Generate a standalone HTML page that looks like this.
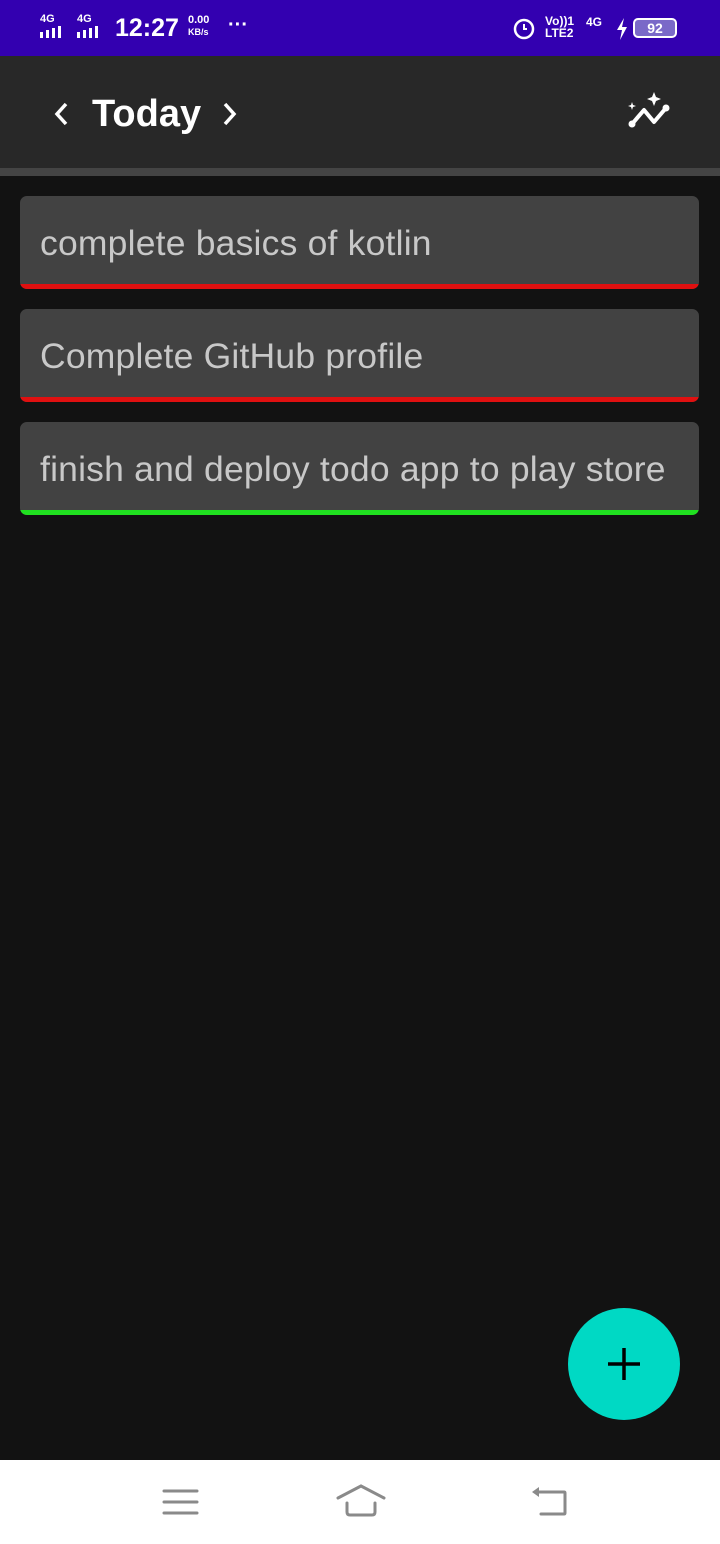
<!DOCTYPE html>
<html><head><meta charset="utf-8"><style>
*{margin:0;padding:0;box-sizing:border-box}
body{width:720px;height:1544px;background:#121212;font-family:"Liberation Sans",sans-serif;position:relative;overflow:hidden}
.sb{position:absolute;top:0;left:0;width:720px;height:56px;background:#3300b0;color:#fff}
.tb{position:absolute;top:56px;left:0;width:720px;height:112px;background:#282828}
.strip{position:absolute;top:168px;left:0;width:720px;height:8px;background:#444}
.card{position:absolute;left:20px;width:679px;height:93px;background:#424242;border-radius:7px;overflow:hidden;color:#c8c8c8;font-size:35.5px;padding-left:20px;line-height:94px;letter-spacing:0.2px}
.card:after{content:"";position:absolute;left:0;right:0;bottom:0;height:5px;background:var(--c)}
.fab{position:absolute;left:568px;top:1308px;width:112px;height:112px;border-radius:50%;background:#00d9c4}
.nav{position:absolute;top:1460px;left:0;width:720px;height:84px;background:#fff}
</style></head><body>
<div class="sb">
<div style="position:absolute;left:40px;top:13px;font-size:11px;font-weight:bold">4G</div>
<div style="position:absolute;left:77px;top:13px;font-size:11px;font-weight:bold">4G</div>
<svg style="position:absolute;left:40px;top:26px" width="70" height="14"><g fill="#fff"><rect x="0" y="6" width="3" height="6"/><rect x="6" y="4" width="3" height="8"/><rect x="12" y="2" width="3" height="10"/><rect x="18" y="0" width="3" height="12"/><rect x="37" y="6" width="3" height="6"/><rect x="43" y="4" width="3" height="8"/><rect x="49" y="2" width="3" height="10"/><rect x="55" y="0" width="3" height="12"/></g></svg>
<div style="position:absolute;left:115px;top:14px;font-size:25px;font-weight:bold">12:27</div>
<div style="position:absolute;left:188px;top:14px;font-size:11px;font-weight:bold;line-height:12px">0.00<br><span style="font-size:9px">KB/s</span></div>
<div style="position:absolute;left:228px;top:14px;font-size:20px;font-weight:bold">···</div>
<svg style="position:absolute;left:512px;top:16px" width="24" height="24"><circle cx="12" cy="13" r="9" fill="none" stroke="#fff" stroke-width="2.5"/><path d="M12 8v5h3" stroke="#fff" stroke-width="2" fill="none"/></svg>
<div style="position:absolute;left:545px;top:15px;font-size:12px;font-weight:bold;line-height:12px">Vo))1<br>LTE2</div>
<div style="position:absolute;left:586px;top:15px;font-size:12px;font-weight:bold">4G</div>
<svg style="position:absolute;left:615px;top:18px" width="14" height="22"><path d="M9 0L2 12h5l-2 10 7-13H7z" fill="#fff"/></svg>
<div style="position:absolute;left:633px;top:18px;width:44px;height:20px;border:2px solid #fff;border-radius:5px;background:#7a69c8;font-size:14px;font-weight:bold;text-align:center;line-height:16px">92</div>
</div>
<div class="tb">
<svg style="position:absolute;left:52px;top:44px" width="20" height="28"><path d="M14 4L5 14l9 10" stroke="#fff" stroke-width="3.5" fill="none"/></svg>
<div style="position:absolute;left:92px;top:37px;font-size:38px;font-weight:bold;color:#fff">Today</div>
<svg style="position:absolute;left:220px;top:44px" width="20" height="28"><path d="M5 4l9 10-9 10" stroke="#fff" stroke-width="3.5" fill="none"/></svg>
<svg style="position:absolute;left:624px;top:90px" width="52" height="44" viewBox="0 0 52 44" transform="translate(0,-56)"><path d="M8 34l12-14 10 12 12-14" stroke="#fff" stroke-width="4" fill="none" stroke-linejoin="round"/><circle cx="8" cy="34" r="3.5" fill="#fff"/><circle cx="42" cy="18" r="3.5" fill="#fff"/><path d="M30 2l2 5 5 2-5 2-2 5-2-5-5-2 5-2z" fill="#fff"/><path d="M8 12l1 3 3 1-3 1-1 3-1-3-3-1 3-1z" fill="#fff"/></svg>
</div>
<div class="strip"></div>
<div class="card" style="top:196px;--c:#e01010">complete basics of kotlin</div>
<div class="card" style="top:309px;--c:#e01010">Complete GitHub profile</div>
<div class="card" style="top:422px;--c:#20e020">finish and deploy todo app to play store</div>
<div class="fab"><svg width="112" height="112"><path d="M56 40v32M40 56h32" stroke="#000" stroke-width="3.5"/></svg></div>
<div class="nav">
<svg style="position:absolute;left:160px;top:24px" width="44" height="36"><path d="M4 7h33M4 18h33M4 29h33" stroke="#8a8a8a" stroke-width="3" stroke-linecap="round"/></svg>
<svg style="position:absolute;left:334px;top:24px" width="54" height="36"><path d="M4 14l23-12 23 12" stroke="#8a8a8a" stroke-width="3" fill="none" stroke-linecap="round"/><path d="M13 19v9q0 3 3 3h22q3 0 3-3v-9" stroke="#8a8a8a" stroke-width="3" fill="none" stroke-linecap="round"/></svg>
<svg style="position:absolute;left:528px;top:24px" width="44" height="36"><path d="M7 8h29q1 0 1 1v20q0 1-1 1H13" stroke="#8a8a8a" stroke-width="3" fill="none" stroke-linecap="round"/><path d="M4 8l7-5v10z" fill="#8a8a8a"/></svg>
</div>
</body></html>
